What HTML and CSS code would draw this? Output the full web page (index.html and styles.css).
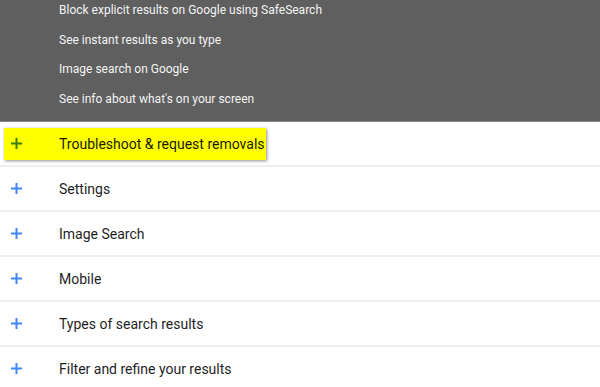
FILE: index.html
```
<!DOCTYPE html>
<html lang="en">
<head>
    <meta charset="UTF-8">
    <title>Search Help</title>
    <link rel="stylesheet" href="styles.css">
</head>
<body>

<div class="topic-panel">
    <ul class="topic-list">
        <li>Block explicit results on Google using SafeSearch</li>
        <li>See instant results as you type</li>
        <li>Image search on Google</li>
        <li>See info about what's on your screen</li>
    </ul>
</div>

<div class="section-list">
    <div class="section-row">
        <span class="highlight">
            <svg class="plus plus-marked" viewBox="0 0 11 11"><path d="M5.5 0v11M0 5.5h11" stroke="currentColor" stroke-width="2"/></svg>
            <span class="label">Troubleshoot &amp; request removals</span>
        </span>
    </div>
    <div class="section-row">
        <svg class="plus" viewBox="0 0 11 11"><path d="M5.5 0v11M0 5.5h11" stroke="currentColor" stroke-width="2"/></svg>
        <span class="label">Settings</span>
    </div>
    <div class="section-row">
        <svg class="plus" viewBox="0 0 11 11"><path d="M5.5 0v11M0 5.5h11" stroke="currentColor" stroke-width="2"/></svg>
        <span class="label">Image Search</span>
    </div>
    <div class="section-row">
        <svg class="plus" viewBox="0 0 11 11"><path d="M5.5 0v11M0 5.5h11" stroke="currentColor" stroke-width="2"/></svg>
        <span class="label">Mobile</span>
    </div>
    <div class="section-row">
        <svg class="plus" viewBox="0 0 11 11"><path d="M5.5 0v11M0 5.5h11" stroke="currentColor" stroke-width="2"/></svg>
        <span class="label">Types of search results</span>
    </div>
    <div class="section-row">
        <svg class="plus" viewBox="0 0 11 11"><path d="M5.5 0v11M0 5.5h11" stroke="currentColor" stroke-width="2"/></svg>
        <span class="label">Filter and refine your results</span>
    </div>
</div>

</body>
</html>
```

FILE: styles.css
```
* {
    box-sizing: border-box;
}

body {
    margin: 0;
    font-family: Roboto, "Liberation Sans", sans-serif;
    background-color: #fff;
    overflow: hidden;
}

.topic-panel {
    height: 122px;
    background-color: #5f5f5f;
    border-bottom: 1px solid #8a8a8a;
}

.topic-list {
    list-style: none;
    margin: 0;
    padding: 0 0 0 59px;
    display: flex;
    flex-direction: column;
    gap: 9.5px;
}

.topic-list li {
    font-size: 12px;
    line-height: 20px;
    color: #f3f3f3;
}

.section-row {
    height: 45px;
    display: flex;
    align-items: center;
    padding-left: 11px;
    border-bottom: 2px solid #eeeeee;
}

.plus {
    width: 11px;
    height: 11px;
    flex-shrink: 0;
    color: #4285f4;
    margin-right: 37px;
}

.label {
    font-size: 14px;
    color: #1f1f1f;
}

.highlight {
    display: inline-flex;
    align-items: center;
    margin-left: -7px;
    padding: 0 1px 0 7px;
    height: 32px;
    background-color: #ffff00;
    box-shadow: 1px 1px 3px rgba(0, 0, 0, 0.45);
}

.highlight .label {
    color: #1a1a00;
}

.plus-marked {
    color: #3b7d12;
}
```
